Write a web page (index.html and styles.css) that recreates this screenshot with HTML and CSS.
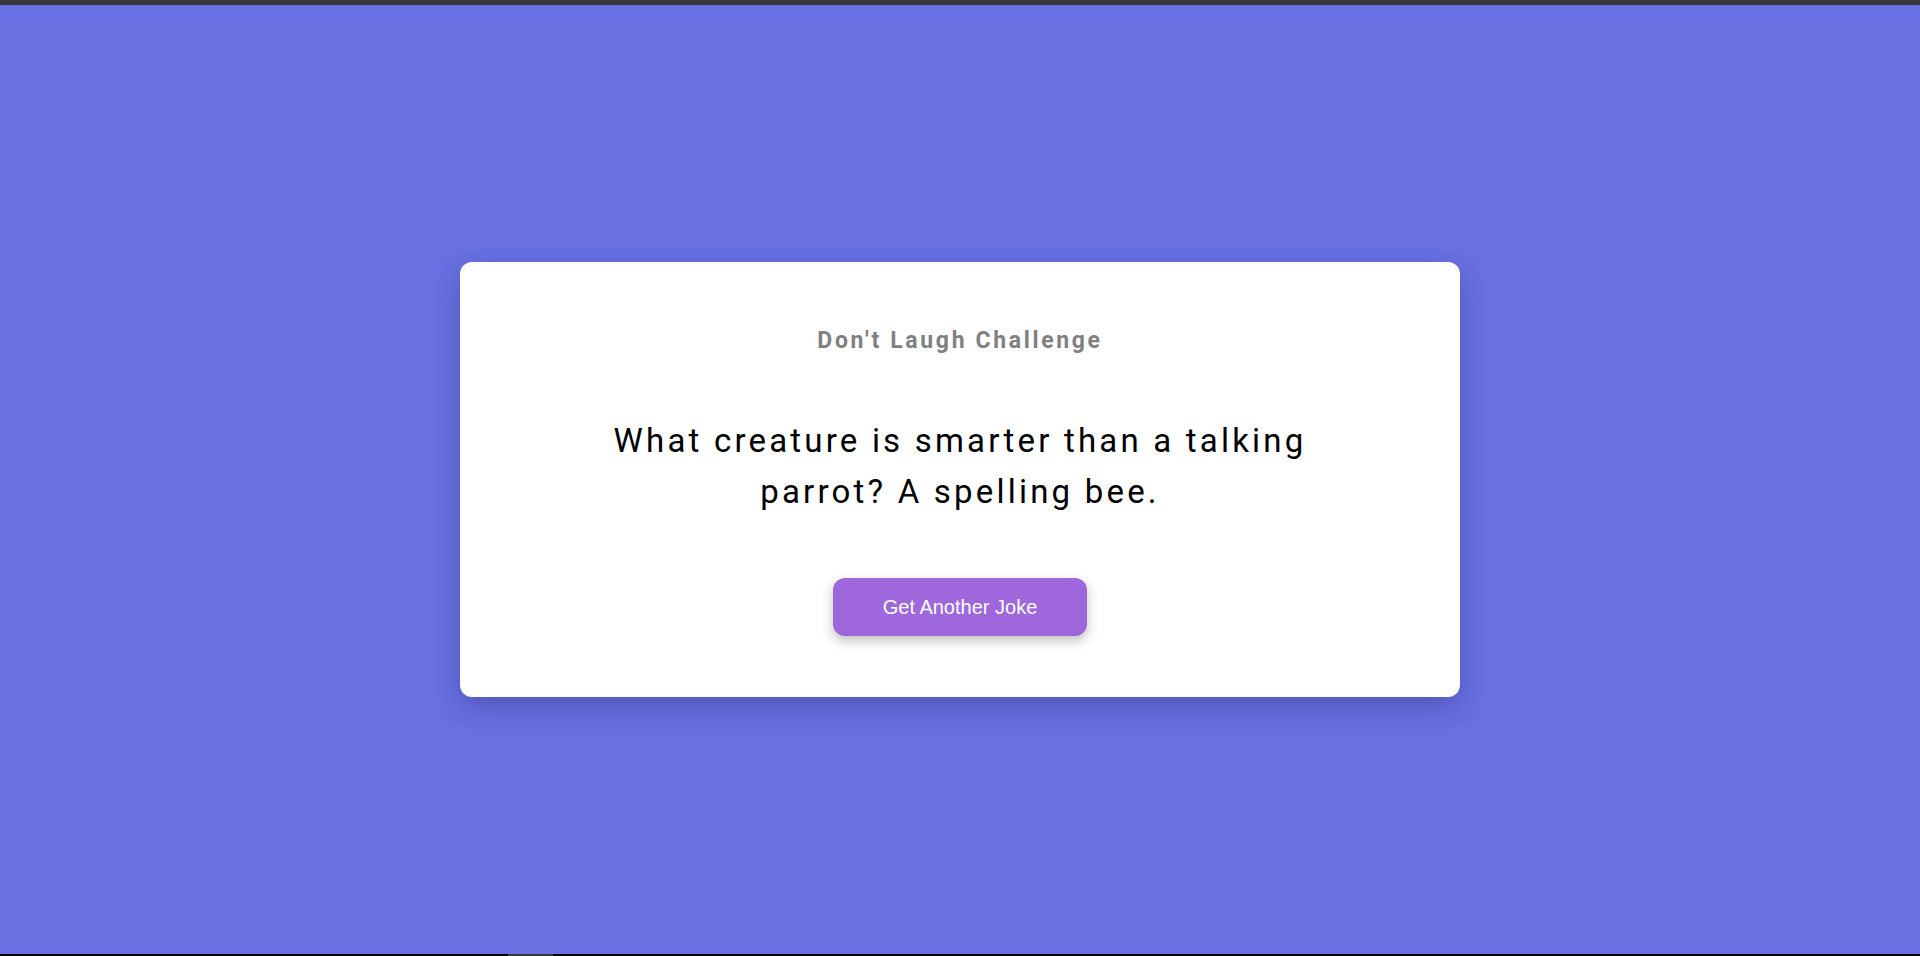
FILE: index.html
```html
<!DOCTYPE html>
<html lang="en">
<head>
<meta charset="utf-8">
<title>Don't Laugh Challenge</title>
<link rel="stylesheet" href="styles.css">
</head>
<body>
  <div class="topbar"></div>
  <main class="stage">
    <section class="card">
      <h1 class="title">Don't Laugh Challenge</h1>
      <p class="joke">What creature is smarter than a talking parrot? A spelling bee.</p>
      <button class="btn" type="button">Get Another Joke</button>
    </section>
  </main>
  <div class="bottombar"><span class="tab"></span></div>
</body>
</html>
```

FILE: styles.css
```css
* { box-sizing: border-box; }
html, body { margin: 0; padding: 0; }
body {
  height: 956px;
  display: flex;
  flex-direction: column;
  background: #6970e1;
  font-family: Roboto, "Liberation Sans", sans-serif;
  overflow: hidden;
}
.topbar {
  height: 5px;
  flex: 0 0 5px;
  background: #36383b;
}
.stage {
  flex: 1;
  display: flex;
  align-items: center;
  justify-content: center;
}
.card {
  width: 1000px;
  background: #ffffff;
  border-radius: 12px;
  padding: 65px 50px 61px;
  display: flex;
  flex-direction: column;
  align-items: center;
  text-align: center;
  box-shadow: 0 10px 28px rgba(20, 20, 80, 0.28);
}
.title {
  margin: 0 0 61px;
  font-size: 23px;
  font-weight: 700;
  letter-spacing: 2.65px;
  color: #808080;
  line-height: normal;
}
.joke {
  margin: 0 0 61px;
  max-width: 740px;
  font-size: 33px;
  line-height: 51px;
  font-weight: 400;
  color: #000000;
  letter-spacing: 3.2px;
}
.btn {
  width: 254px;
  height: 58px;
  border: 0;
  border-radius: 12px;
  background: #9e67dc;
  color: #ffffff;
  font-family: "Liberation Sans", Arial, sans-serif;
  font-size: 20px;
  box-shadow: 0 5px 12px rgba(0, 0, 0, 0.25);
  cursor: pointer;
}
.bottombar {
  height: 2px;
  flex: 0 0 2px;
  background: #000000;
  display: flex;
}
.tab {
  margin-left: 508px;
  width: 45px;
  height: 2px;
  background: #3b3b3f;
}
```
